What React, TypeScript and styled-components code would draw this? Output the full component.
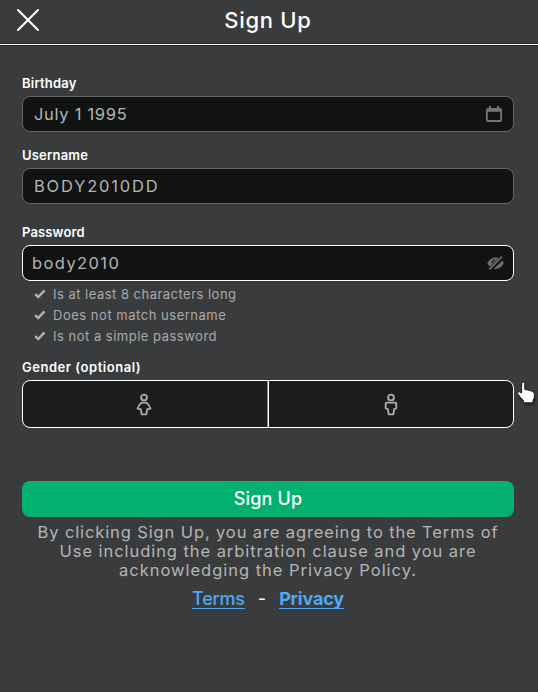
import React from 'react';
import styled, { createGlobalStyle } from 'styled-components';

const GlobalStyle = createGlobalStyle`
  * { box-sizing: border-box; }
  body { margin: 0; background: #3a3b3d; overflow: hidden; }
  button { font: inherit; padding: 0; border: 0; background: none; }
`;

const Page = styled.div`
  position: relative;
  width: 538px;
  height: 692px;
  overflow: hidden;
  background: #3a3b3d;
  color: #fff;
  font-family: Inter, 'Liberation Sans', sans-serif;
`;

const Header = styled.header`
  display: grid;
  grid-template-columns: 56px 1fr 58px;
  align-items: center;
  height: 45px;
  border-bottom: 1px solid #fff;
  box-shadow: inset 0 -1px #1d2832, 0 1px #1d2832;
`;

const CloseButton = styled.button`
  display: flex;
  width: 24px;
  height: 24px;
  margin: -4px 0 0 16px;
  color: #fff;
`;

const Title = styled.h1`
  margin: -4px 0 0;
  text-align: center;
  font-size: 22px;
  line-height: 28px;
  font-weight: 500;
  letter-spacing: 0.7px;
`;

const Form = styled.main`
  display: flex;
  flex-direction: column;
  padding: 29px 24px 0 22px;
`;

const Field = styled.section<{ $gap: number }>`
  display: flex;
  flex-direction: column;
  margin-bottom: ${p => p.$gap}px;
`;

const Label = styled.label<{ $spacing: number }>`
  height: 22px;
  line-height: 19px;
  font-size: 13px;
  font-weight: 600;
  letter-spacing: ${p => p.$spacing}px;
`;

const Input = styled.div<{ $active?: boolean; $spacing: number }>`
  display: flex;
  align-items: center;
  justify-content: space-between;
  height: 36px;
  padding: 0 ${p => (p.$active ? 9 : 11)}px;
  border: 1px solid ${p => (p.$active ? '#fff' : '#656668')};
  border-radius: 8px;
  background: #111312;
  color: #b4b5b5;
  font-size: 16.5px;
  letter-spacing: ${p => p.$spacing}px;
`;

const Rules = styled.ul`
  display: flex;
  flex-direction: column;
  margin: 2px 0 12px 12px;
  padding: 0;
  list-style: none;
  color: #a9aaab;
`;

const Rule = styled.li<{ $spacing: number }>`
  display: flex;
  align-items: center;
  gap: 7px;
  height: 21px;
  font-size: 13px;
  letter-spacing: ${p => p.$spacing}px;
`;

const GenderGroup = styled.div`
  display: grid;
  grid-template-columns: 1fr 1fr;
  height: 48px;
  border: 1px solid #fff;
  border-radius: 8px;
  background: #1b1c1e;
`;

const GenderOption = styled.button`
  display: flex;
  align-items: center;
  justify-content: center;
  padding-top: 1px;
  color: #aaabac;
  &:first-child {
    padding-right: 2px;
    border-right: 1px solid #858687;
  }
  & + & { border-left: 1px solid #fff; }
`;

const Submit = styled.button`
  height: 36px;
  margin-bottom: 6px;
  padding-bottom: 1px;
  border-radius: 8px;
  background: #02b06f;
  color: #fff;
  font-size: 18px;
  font-weight: 500;
  letter-spacing: 0.15px;
`;

const Legal = styled.p`
  display: flex;
  flex-direction: column;
  align-items: center;
  margin: 0 0 8px;
  color: #b4b5b5;
  font-size: 16.5px;
  line-height: 19px;
  white-space: nowrap;
`;

const LegalLine = styled.span<{ $spacing: number }>`
  letter-spacing: ${p => p.$spacing}px;
`;

const Links = styled.nav`
  display: flex;
  justify-content: center;
  gap: 13px;
  font-size: 18px;
  line-height: 21px;
`;

const Link = styled.a<{ $bold?: boolean }>`
  height: 21px;
  border-bottom: 1px solid #4fa8f5;
  color: #4fa8f5;
  font-weight: ${p => (p.$bold ? 700 : 500)};
  letter-spacing: -0.2px;
`;

const Pointer = styled.svg`
  position: absolute;
  left: 515px;
  top: 381px;
  filter: drop-shadow(1px 2px 1px rgba(0, 0, 0, 0.35));
`;

const CloseIcon = () => (
  <svg width="24" height="24" viewBox="0 0 24 24" stroke="currentColor" strokeWidth="2" strokeLinecap="round">
    <path d="M2 2 22 22M22 2 2 22" />
  </svg>
);

const CalendarIcon = () => (
  <svg width="16" height="16" viewBox="0 0 16 16" fill="none" stroke="#747577">
    <rect x=".9" y="3" width="14.2" height="12" rx="1.3" strokeWidth="1.8" />
    <path d="M.8 4h14.4" strokeWidth="3.6" />
    <path d="M4 0v3M12 0v3" strokeWidth="2" />
  </svg>
);

const HiddenIcon = () => (
  <svg width="17" height="16" viewBox="0 0 17 16">
    <path d="M.6 8.3C2.6 3 8.6 1 13.7 3.8L5.2 13C3.1 12 1.3 10.4.6 8.3Z" fill="#6b6c6e" />
    <path d="M15.5 5.6c.6.8.9 1.4 1.2 2.4-1.5 4.4-5.2 6.4-10 5.8Z" fill="#6b6c6e" />
    <path d="M5 8.1a3.5 3.5 0 0 1 3-3.3" fill="none" stroke="#111312" strokeWidth="1.1" />
    <path d="M2.5 14.5 15 2" stroke="#111312" strokeWidth="3.4" />
    <path d="M2.3 14.4 15 1.6" stroke="#6b6c6e" strokeWidth="1.8" />
  </svg>
);

const CheckIcon = () => (
  <svg width="12" height="10" viewBox="0 0 12 10" fill="none" stroke="#b0b1b2" strokeWidth="2.5">
    <path d="M1.2 5.2 4.2 8 10.5 1.4" />
  </svg>
);

const FemaleIcon = () => (
  <svg width="16" height="24" viewBox="0 0 16 24" fill="none" stroke="currentColor" strokeWidth="1.9" strokeLinejoin="round">
    <circle cx="8" cy="4.5" r="2.9" />
    <path d="M5.7 9.6h4.6c1.9 1.4 3.2 3.3 4.2 5.9l-3.3.9-.9 5H5.7l-.9-5-3.3-.9c1-2.6 2.3-4.5 4.2-5.9Z" />
  </svg>
);

const MaleIcon = () => (
  <svg width="16" height="24" viewBox="0 0 16 24" fill="none" stroke="currentColor" strokeWidth="1.9" strokeLinejoin="round">
    <circle cx="8" cy="4.5" r="2.9" />
    <path d="M3.6 9.6h8.8c.6 0 .9.3.9.9v4.7l-2.1 1-.9 5.2H5.7l-.9-5.2-2.1-1v-4.7c0-.6.3-.9.9-.9Z" />
  </svg>
);

const rules = [
  { text: 'Is at least 8 characters long', spacing: 0.48 },
  { text: 'Does not match username', spacing: 0.52 },
  { text: 'Is not a simple password', spacing: 0.5 },
];

export default function App() {
  return (
    <Page>
      <GlobalStyle />
      <Header>
        <CloseButton aria-label="Close"><CloseIcon /></CloseButton>
        <Title>Sign Up</Title>
      </Header>
      <Form>
        <Field $gap={14}>
          <Label $spacing={0.22}>Birthday</Label>
          <Input $spacing={0.7}>July 1 1995<CalendarIcon /></Input>
        </Field>
        <Field $gap={19}>
          <Label $spacing={0.2}>Username</Label>
          <Input $spacing={1.8}>BODY2010DD</Input>
        </Field>
        <Field $gap={0}>
          <Label $spacing={0.15}>Password</Label>
          <Input $active $spacing={1.4}>body2010<HiddenIcon /></Input>
          <Rules>
            {rules.map(r => <Rule key={r.text} $spacing={r.spacing}><CheckIcon />{r.text}</Rule>)}
          </Rules>
        </Field>
        <Field $gap={53}>
          <Label $spacing={0.53}>Gender (optional)</Label>
          <GenderGroup>
            <GenderOption aria-label="Female"><FemaleIcon /></GenderOption>
            <GenderOption aria-label="Male"><MaleIcon /></GenderOption>
          </GenderGroup>
        </Field>
        <Submit>Sign Up</Submit>
        <Legal>
          <LegalLine $spacing={0.88}>By clicking Sign Up, you are agreeing to the Terms of</LegalLine>
          <LegalLine $spacing={0.94}>Use including the arbitration clause and you are</LegalLine>
          <LegalLine $spacing={0.98}>acknowledging the Privacy Policy.</LegalLine>
        </Legal>
        <Links>
          <Link>Terms</Link>
          <span>-</span>
          <Link $bold>Privacy</Link>
        </Links>
      </Form>
      <Pointer width="22" height="26" viewBox="0 0 22 26">
        <path d="M7 1.8q1.6-1.2 2.8.5v6.2l3 .5 3 .8 2.7 1.3q.9.8.8 2.5v3l-1.3 3v2.2H8.4v-2.2L5.2 16 2.7 12.7q-.5-2 1.4-2.1L6.6 12V2.5Z" fill="#fff" stroke="#202124" strokeWidth="1" />
      </Pointer>
    </Page>
  );
}
